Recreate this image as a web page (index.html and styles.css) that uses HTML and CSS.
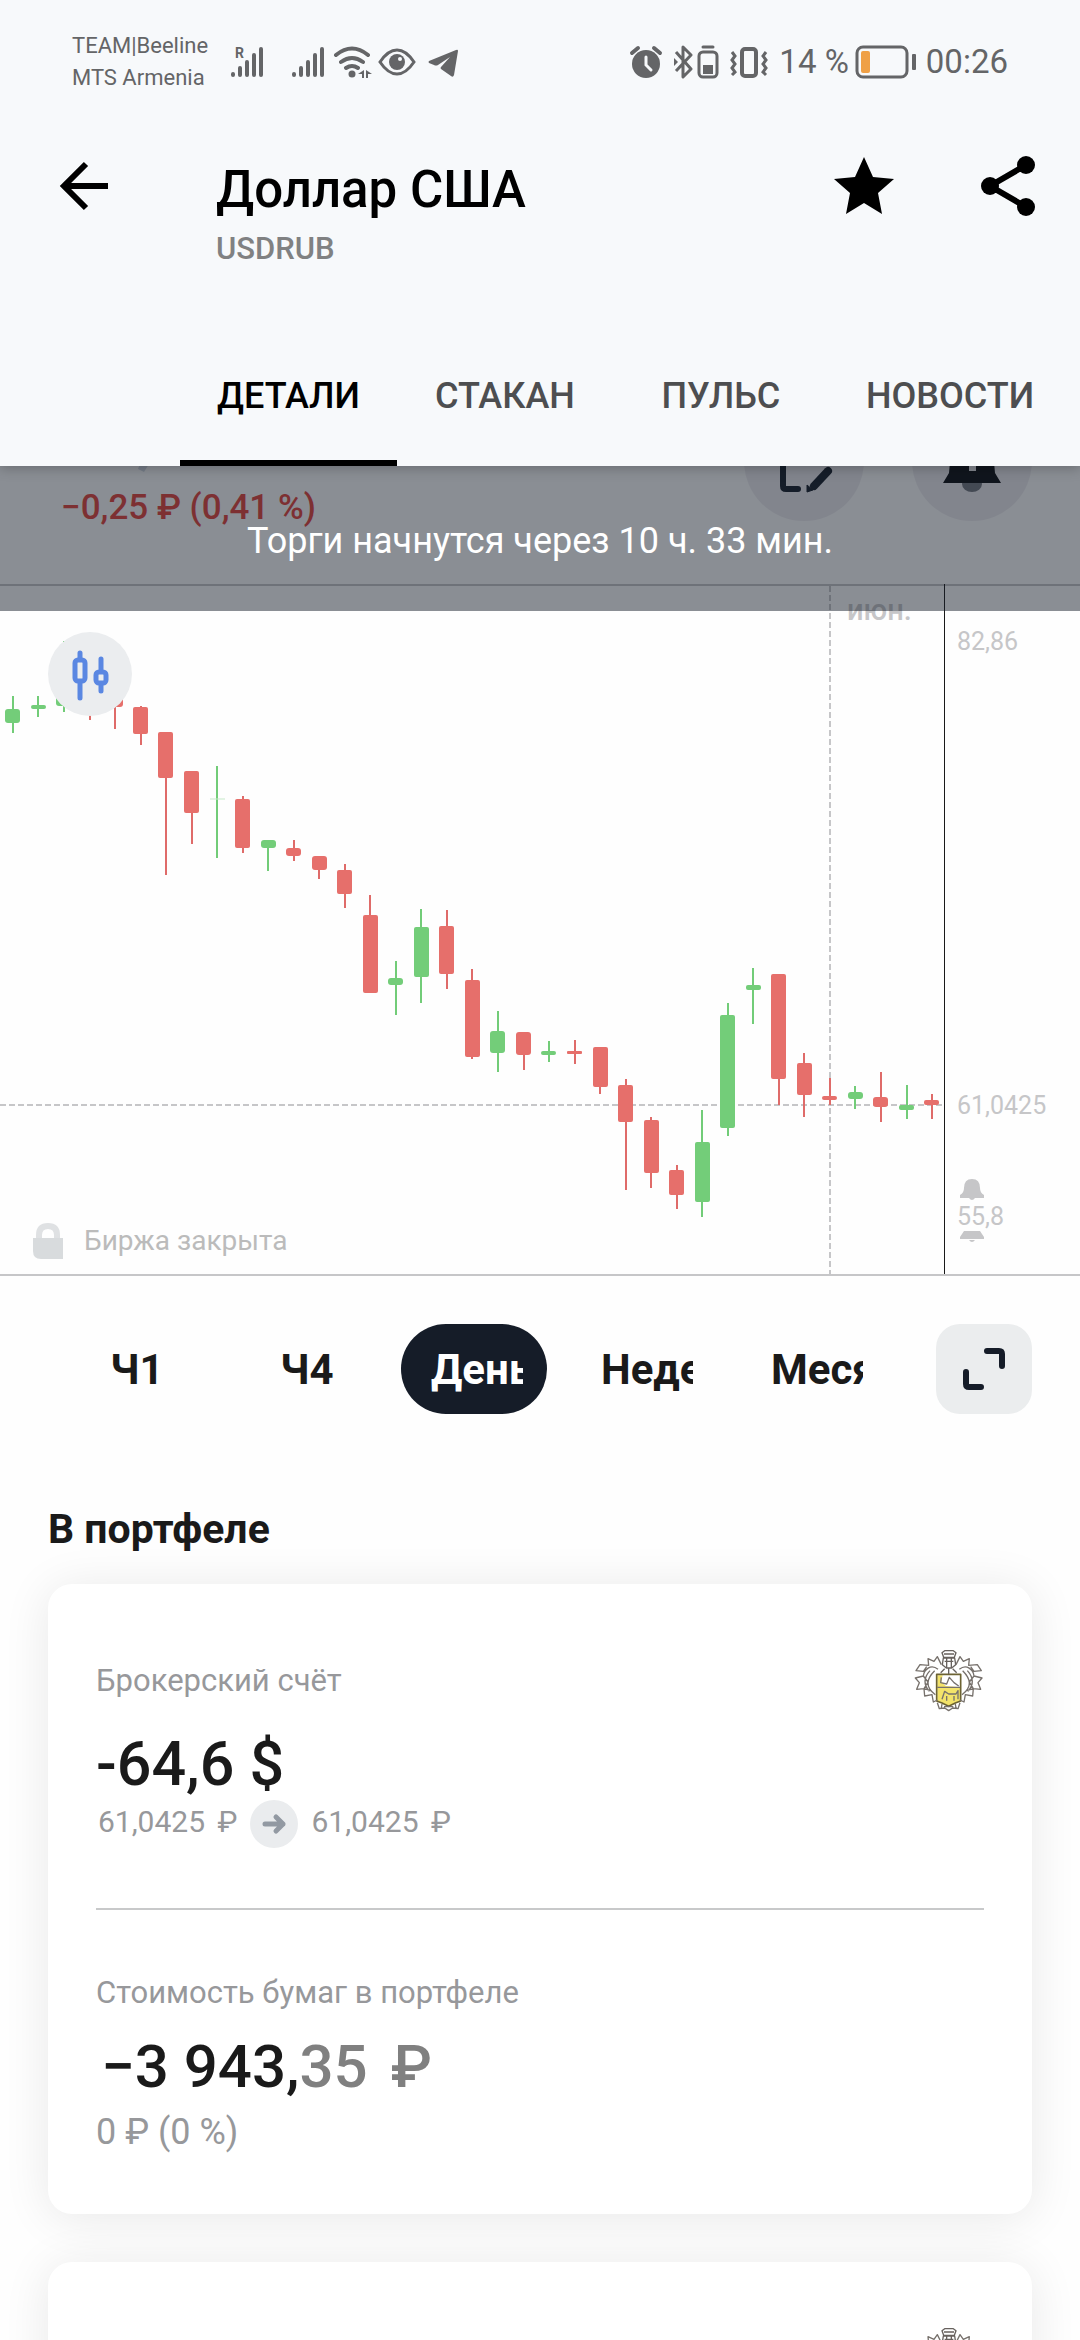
FILE: index.html
```html
<!DOCTYPE html>
<html lang="ru">
<head>
<meta charset="utf-8">
<meta name="viewport" content="width=device-width, initial-scale=1">
<title>Доллар США</title>
<link rel="stylesheet" href="styles.css">
</head>
<body>
<svg class="defs" aria-hidden="true">
  <symbol id="bars" viewBox="0 0 34 32">
    <path d="M3 28v1M10 22v7M17 16v13M24 9v20M31 3v26" fill="none" stroke="currentColor" stroke-width="4" stroke-linecap="round"/>
  </symbol>
  <symbol id="crest" viewBox="0 0 210 186">
    <path fill="#f3e36a" d="M70 76h16l-4 20 14 12 42 4v42l-32 14-36-14z"/>
    <g fill="none" stroke="#77716c" stroke-width="4" stroke-linejoin="round">
      <path d="M68 73h72v80l-16 6-20 10-20-10-16-6z" stroke="#6d6333" stroke-width="5"/>
      <path d="M70 112h68M82 82l-2 16 18 4 8-20 14 16 14 10M84 148l8-24 12 8h22l6-10v26M98 138v14M120 138v14"/>
      <path d="M84 8l8-6h26l8 6-5 14H89zM90 12h30M88 24h34l3 20-12 10H97L85 44zM92 34h26M98 22v30M112 22v30M104 54v18M92 56l-12 12M116 56l12 12" stroke="#68625e"/>
      <path d="M82 44L70 20 60 34 42 26l2 20-26-2L6 62l22 2 10-14M72 58C50 40 30 60 28 78L4 84l12 14-8 20 22-2 2 22 22-4 4 22 12-6M62 62c-24 24-30 48 2 72M48 62c-20 22-18 44-2 62M28 78l14 18-12 20 20 6"/>
      <path d="M126 44l12-24 10 14 18-8-2 20 26-2 12 18-22 2-10-14M136 58c22-18 42 2 44 20l24 6-12 14 8 20-22-2-2 22-22-4-4 22-12-6M146 62c24 24 30 48-2 72M160 62c20 22 18 44 2 62M180 78l-14 18 12 20-20 6"/>
      <path d="M70 158l6 18 16-2 12 8 12-8 16 2 6-18M84 162l-2 12M124 162l2 12M90 170h28"/>
    </g>
  </symbol>
</svg>

<div class="screen">
  <header class="header">
    <div class="status">
      <div class="carriers"><span>TEAM|Beeline</span><span>MTS Armenia</span></div>
      <div class="status-icons">
        <span class="roaming"><small>R</small><svg width="34" height="32"><use href="#bars"/></svg></span>
        <svg class="second-sim" width="34" height="32"><use href="#bars"/></svg>
        <svg width="40" height="32" viewBox="0 0 40 32"><g fill="none" stroke="currentColor" stroke-width="4" stroke-linecap="round"><path d="M3 9Q19-4 35 9M8 16q11-8 22 0M13 22q6-4 12 0"/></g><circle cx="19" cy="28" r="3.500"/><path d="M31 24v8h-2v-4h-4zM33 24v8h2v-4h4z"/></svg>
        <svg class="eye" width="38" height="32" viewBox="0 0 38 32"><path d="M2 16Q10 4 19 4t17 12Q28 28 19 28T2 16z" fill="none" stroke="currentColor" stroke-width="3"/><circle cx="19" cy="16" r="8"/><circle cx="22" cy="13" r="2" fill="#f7f9fb"/></svg>
        <svg class="plane" width="32" height="32" viewBox="0 0 32 32"><path d="M2 15L29 4q2-1 2 1l-4 24q-1 3-3 1l-10-7q-1-1 0-2l9-10-12 8q-2 1-4 0l-5-2q-1-1 0-2z"/></svg>
      </div>
      <div class="status-right">
        <svg width="34" height="34" viewBox="0 0 34 34"><circle cx="17" cy="19" r="14"/><path d="M3 8l6-5M31 8l-6-5" fill="none" stroke="currentColor" stroke-width="4" stroke-linecap="round"/><path d="M17 12v8l5 5" fill="none" stroke="#f7f9fb" stroke-width="3" stroke-linecap="round"/></svg>
        <svg class="bluetooth" width="46" height="34" viewBox="0 0 46 34"><g fill="none" stroke="currentColor" stroke-width="3" stroke-linejoin="round"><path d="M3 7l15 17-8 8V2l8 8L3 26"/><rect x="26" y="7" width="18" height="25" rx="4"/><path d="M30 2h10" stroke-linecap="round"/></g><path d="M1 13l4 4-4 4zM30 20h10v9H30z"/></svg>
        <svg class="vibrate" width="40" height="34" viewBox="0 0 40 34"><g fill="none" stroke="currentColor" stroke-width="4"><rect x="13" y="4" width="14" height="27" rx="3"/><path d="M3 7l3 4-3 4 3 4-3 4 3 4-3 3M37 7l-3 4 3 4-3 4 3 4-3 4 3 3" stroke-width="3"/></g></svg>
        <span>14 %</span>
        <svg class="battery" width="62" height="34" viewBox="0 0 62 34"><rect x="2" y="2" width="50" height="30" rx="6" fill="none" stroke="currentColor" stroke-width="3"/><rect x="6" y="6" width="9" height="22" rx="2" fill="#efa046"/><rect x="57" y="9" width="4" height="16" rx="1"/></svg>
        <time>00:26</time>
      </div>
    </div>

    <div class="appbar">
      <button class="icon-button" aria-label="Назад"><svg width="50" height="60" viewBox="0 0 50 60"><path d="M50 30H8M28 8L6 30l22 22" fill="none" stroke="currentColor" stroke-width="6"/></svg></button>
      <div class="titles"><h1>Доллар США</h1><p>USDRUB</p></div>
      <button class="icon-button" aria-label="Избранное"><svg width="60" height="60" viewBox="0 0 60 60"><path d="M30 1l9 20 21 2-16 14 4 21-18-11-18 11 4-21L0 23l21-2z"/></svg></button>
      <button class="icon-button" aria-label="Поделиться"><svg width="56" height="60" viewBox="0 0 56 60"><path d="M46 9L10 30l36 21" fill="none" stroke="currentColor" stroke-width="6"/><circle cx="46" cy="9" r="9"/><circle cx="10" cy="30" r="9"/><circle cx="46" cy="51" r="9"/></svg></button>
    </div>

    <nav class="tabs">
      <a class="tab active" href="#details" aria-current="page">ДЕТАЛИ</a>
      <a class="tab" href="#book">СТАКАН</a>
      <a class="tab" href="#pulse">ПУЛЬС</a>
      <a class="tab" href="#news">НОВОСТИ</a>
    </nav>
  </header>

  <main class="content" id="details">
    <p class="banner">Торги начнутся через 10 ч. 33 мин.</p>

    <section class="quote">
      <div class="change">
        <svg width="12" height="12" viewBox="0 0 12 12" aria-hidden="true"><path d="M3 0h9L7 8 1 5z" fill="#d5dbe5"/></svg>
        <p>−0,25 ₽ (0,41 %)</p>
      </div>
      <button class="round" aria-label="Заметка"><svg width="120" height="120" viewBox="0 0 120 120"><path d="M39 40v45q0 3 3 3h12" fill="none" stroke="#151c28" stroke-width="6" stroke-linecap="round"/><path d="M84 70L70 85" stroke="#151c28" stroke-width="8" stroke-linecap="round"/><path d="M63 91v-7l6 5z" fill="#151c28" stroke="#151c28" stroke-width="1"/></svg></button>
      <button class="round" aria-label="Уведомления"><svg width="120" height="120" viewBox="0 0 120 120"><ellipse cx="60" cy="83" rx="10" ry="8" fill="#71747c"/><path d="M60 30q18 0 21 20l2 22 6 10H31l6-10 2-22q3-20 21-20z" fill="#0a0c10"/><path d="M57 52h7v18h-7z" fill="#efedf1"/></svg></button>
    </section>

    <section class="chart">
      <svg class="plot" viewBox="0 584 1080 692" role="img" aria-label="График цены">
        <path d="M0 585h1080M0 1275h1080" stroke="#c6c6c8" stroke-width="2"/>
        <path d="M830 586v688" stroke="#c6c6c8" stroke-width="2" stroke-dasharray="6 3"/>
        <path d="M0 1105h944" stroke="#c6c6c8" stroke-width="2" stroke-dasharray="6 3"/>
        <path d="M944 584h1v690h-1z" fill="#1a1a1a"/>
        <path stroke="#72cc78" stroke-width="2" d="M13 696v37M38 696v21M64 641v71M217 766v92M268 840v31M396 961v54M421 909v94M498 1011v61M549 1041v21M702 1110v107M728 1003v133M753 968v56M855 1086v23M907 1085v34"/>
        <path stroke="#c6e9c9" d="M210 799h15"/>
        <path stroke="#df6b69" stroke-width="2" d="M90 690v30M115 690v39M141 706v39M166 732v143M192 771v73M243 796v57M294 840v21M319 856v23M345 864v44M370 895v98M447 910v79M472 969v90M524 1032v38M575 1040v24M600 1047v47M626 1079v111M651 1117v71M677 1165v44M779 974v131M804 1053v64M830 1078v27M881 1072v50M932 1094v25"/>
        <g fill="#73cd79">
          <rect x="5" y="709" width="15" height="14" rx="3"/><rect x="31" y="705" width="15" height="4" rx="2"/><rect x="56" y="690" width="15" height="16" rx="3"/>
          <rect x="261" y="840" width="15" height="8" rx="3"/><rect x="388" y="978" width="15" height="7" rx="3"/><rect x="414" y="927" width="15" height="50" rx="2"/>
          <rect x="490" y="1031" width="15" height="22" rx="3"/><rect x="541" y="1051" width="15" height="4" rx="2"/><rect x="695" y="1142" width="15" height="60" rx="2"/>
          <rect x="720" y="1015" width="15" height="113" rx="2"/><rect x="746" y="985" width="15" height="5" rx="2"/><rect x="848" y="1092" width="15" height="7" rx="3"/><rect x="899" y="1105" width="15" height="5" rx="2"/>
        </g>
        <g fill="#e66f6b">
          <rect x="108" y="690" width="15" height="17" rx="3"/><rect x="133" y="707" width="15" height="27" rx="2"/><rect x="158" y="732" width="15" height="46" rx="2"/>
          <rect x="184" y="771" width="15" height="42" rx="2"/><rect x="235" y="799" width="15" height="49" rx="2"/><rect x="286" y="848" width="15" height="8" rx="3"/>
          <rect x="312" y="856" width="15" height="14" rx="3"/><rect x="337" y="870" width="15" height="24" rx="2"/><rect x="363" y="915" width="15" height="78" rx="2"/>
          <rect x="439" y="926" width="15" height="48" rx="2"/><rect x="465" y="980" width="15" height="77" rx="2"/><rect x="516" y="1032" width="15" height="23" rx="3"/>
          <rect x="567" y="1051" width="15" height="3" rx="1"/><rect x="593" y="1047" width="15" height="40" rx="2"/><rect x="618" y="1085" width="15" height="37" rx="2"/>
          <rect x="644" y="1120" width="15" height="53" rx="2"/><rect x="669" y="1170" width="15" height="25" rx="2"/><rect x="771" y="974" width="15" height="105" rx="2"/>
          <rect x="797" y="1063" width="15" height="32" rx="2"/><rect x="822" y="1096" width="15" height="4" rx="2"/><rect x="873" y="1097" width="15" height="10" rx="3"/><rect x="924" y="1100" width="15" height="5" rx="2"/>
        </g>
        <g class="axis-text">
          <text class="month" x="847" y="620">июн.</text>
          <text x="957" y="650">82,86</text>
          <text x="957" y="1114">61,0425</text>
          <text x="957" y="1225">55,8</text>
        </g>
        <path fill="#c6c6c8" d="M972 1179q8 0 8 9 0 5 4 7v3h-24v-3q4-2 4-7 0-9 8-9zM969 1198h6q-3 4-6 0zM964 1231h16l4 6v2h-24v-2zM969 1240h6q-3 4-6 0z"/>
      </svg>
      <button class="chart-type" aria-label="Тип графика"><svg width="84" height="84" viewBox="0 0 84 84"><g fill="none" stroke="#5a87e2" stroke-width="5" stroke-linecap="round"><path d="M32 21v6M32 50v16M53 27v10M53 53v6"/><rect x="27" y="28" width="10" height="21" rx="3"/><rect x="48" y="40" width="10" height="11" rx="3"/></g></svg></button>
      <p class="closed"><svg width="30" height="38" viewBox="0 0 30 38"><path d="M6 18v-5q0-9 9-9t9 9v5" fill="none" stroke="#dfe1e3" stroke-width="6"/><path d="M0 16h30v21H8q-8 0-8-8z" fill="#d8dbdd"/></svg>Биржа закрыта</p>
    </section>

    <section class="periods">
      <button class="period"><span>Ч1</span></button>
      <button class="period"><span>Ч4</span></button>
      <button class="period selected" aria-pressed="true"><span>День</span></button>
      <button class="period"><span>Неделя</span></button>
      <button class="period"><span>Месяц</span></button>
      <button class="expand" aria-label="Развернуть"><svg width="42" height="42" viewBox="0 0 42 42"><path d="M24 3h12q3 0 3 3v12M3 24v12q0 3 3 3h12" fill="none" stroke="#151c28" stroke-width="6" stroke-linecap="round"/></svg></button>
    </section>

    <section class="portfolio">
      <h2>В портфеле</h2>
      <article class="card">
        <div class="card-head"><span class="label">Брокерский счёт</span><svg width="70" height="62" role="img" aria-label="Банк"><use href="#crest"/></svg></div>
        <p class="amount">-64,6 $</p>
        <p class="prices"><span>61,0425 <span class="currency">₽</span></span><svg width="48" height="48" viewBox="0 0 48 48"><circle cx="24" cy="24" r="24" fill="#eaecee"/><path d="M15 24h18M26 17l7 7-7 7" fill="none" stroke="#9299a2" stroke-width="5" stroke-linecap="round" stroke-linejoin="round"/></svg><span>61,0425 <span class="currency">₽</span></span></p>
        <hr>
        <p class="label">Стоимость бумаг в портфеле</p>
        <p class="amount value">−3 943,<span class="fraction">35 <span class="currency">₽</span></span></p>
        <p class="profit">0 ₽ (0 %)</p>
      </article>
      <article class="card">
        <div class="card-head"><span class="label"></span><svg width="70" height="62" role="img" aria-label="Банк"><use href="#crest"/></svg></div>
      </article>
    </section>
  </main>
</div>
</body>
</html>
```
FILE: styles.css
```css
* { box-sizing: border-box; }

body {
  margin: 0;
  background: #fefefe;
  color: #1a1a1a;
  font-family: Roboto, "Liberation Sans", sans-serif;
}

h1, h2, p { margin: 0; font-weight: 500; }
button { border: 0; padding: 0; background: none; color: inherit; font: inherit; }
svg { display: block; flex: none; fill: currentColor; }
.defs { position: absolute; width: 0; height: 0; }

.screen {
  display: flex;
  flex-direction: column;
  height: 100vh;
  overflow: hidden;
}

/* Header */
.header {
  position: relative;
  z-index: 2;
  flex: none;
  background: #f7f9fb;
  box-shadow: 0 2px 12px rgba(0, 0, 0, 0.25);
}

.status {
  display: flex;
  align-items: center;
  padding: 30px 72px 0 72px;
  color: #646567;
}
.carriers { display: flex; flex-direction: column; width: 158px; font-size: 22px; line-height: 32px; }
.status-icons { display: flex; align-items: center; }
.roaming { position: relative; }
.roaming small { position: absolute; left: 5px; top: -1px; font-size: 14px; line-height: 16px; font-weight: 700; }
.second-sim { margin: 0 8px 0 27px; }
.eye { margin-left: 5px; }
.plane { margin-left: 11px; }
.status-right {
  display: flex;
  align-items: center;
  margin-left: auto;
  font-size: 33px;
  line-height: 40px;
}
.bluetooth { margin: 0 10px; }
.vibrate { margin-right: 10px; }
.battery { margin: 0 9px 0 6px; }

.appbar {
  display: flex;
  align-items: flex-start;
  padding: 62px 44px 0 58px;
  height: 232px;
  color: #000;
}
.titles { flex: 1; margin-left: 108px; padding-top: 4px; }
.titles h1 { font-size: 51px; line-height: 60px; }
.titles p { margin-top: 9px; font-size: 31px; line-height: 40px; color: #808182; }
.icon-button + .icon-button { margin-left: 86px; }

.tabs { display: flex; padding-left: 180px; }
.tab {
  position: relative;
  min-width: 216px;
  padding: 0 37px;
  line-height: 140px;
  font-size: 36px;
  font-weight: 500;
  color: #4d4e50;
  text-align: center;
  text-decoration: none;
}
.tab.active { color: #000; }
.tab.active::after {
  content: "";
  position: absolute;
  left: 0;
  right: 0;
  bottom: 0;
  height: 6px;
  background: #000;
}

/* Scrolled content */
.content { position: relative; flex: 1; min-height: 0; overflow: hidden; }

.banner {
  position: absolute;
  z-index: 1;
  top: 0;
  left: 0;
  right: 0;
  height: 145px;
  padding-top: 54px;
  background: rgba(21, 29, 41, 0.5);
  color: #fff;
  font-size: 36px;
  font-weight: 400;
  line-height: 42px;
  text-align: center;
}

.quote {
  display: flex;
  gap: 48px;
  height: 183px;
  margin-top: -65px;
  padding: 0 48px 0 61px;
}
.change { flex: 1; padding-top: 63px; color: #e5433b; }
.change svg { margin-left: 76px; }
.change p { margin-top: 11px; font-size: 35px; line-height: 42px; }
.round { height: 120px; border-radius: 50%; background: #efedf1; }

.chart { position: relative; }
.plot { width: 100%; height: auto; }
.axis-text { font-size: 25px; fill: #c6c6c8; }
.month { font-size: 29px; font-weight: 500; }
.chart-type {
  position: absolute;
  top: 48px;
  left: 48px;
  border-radius: 50%;
  background: #ebedef;
}
.closed {
  position: absolute;
  left: 33px;
  bottom: 16px;
  display: flex;
  align-items: center;
  gap: 21px;
  font-size: 28px;
  font-weight: 400;
  line-height: 38px;
  color: #bbb;
}

.periods { display: flex; margin-top: 48px; padding: 0 48px 0 49px; }
.period {
  flex: 1 1 0;
  min-width: 0;
  height: 90px;
  margin: 0 12px;
  padding: 2px 24px 0 30px;
  border-radius: 45px;
  font-size: 42px;
  font-weight: 700;
}
.period span { display: block; overflow: hidden; white-space: nowrap; line-height: 60px; }
.period.selected { background: #151c28; color: #fff; }
.expand {
  display: grid;
  place-items: center;
  width: 96px;
  height: 90px;
  margin-left: 37px;
  border-radius: 24px;
  background: #ebedee;
}

.portfolio { padding: 91px 48px 0; }
.portfolio h2 { margin-bottom: 31px; font-size: 41px; font-weight: 700; line-height: 48px; }
.card {
  margin-bottom: 48px;
  padding: 66px 48px 61px;
  border-radius: 24px;
  background: #fff;
  box-shadow: 0 4px 48px rgba(0, 0, 0, 0.09);
}
.card-head { display: flex; align-items: center; justify-content: space-between; margin-bottom: 16px; }
.label { font-size: 31px; font-weight: 400; line-height: 40px; color: #97989b; }
.amount { font-size: 61px; line-height: 72px; }
.prices {
  display: flex;
  gap: 13px;
  padding-left: 2px;
  font-size: 30px;
  font-weight: 400;
  line-height: 44px;
  color: #97989b;
}
.currency { margin-left: 5px; }
hr { height: 2px; margin: 60px 0 63px; border: 0; background: #c8c9ca; }
.value { margin: 18px 0 8px; padding-left: 5px; font-size: 60px; }
.fraction { color: #808080; }
.value .currency { margin-left: 8px; }
.profit { font-size: 36px; font-weight: 400; line-height: 42px; color: #97989b; }
```
